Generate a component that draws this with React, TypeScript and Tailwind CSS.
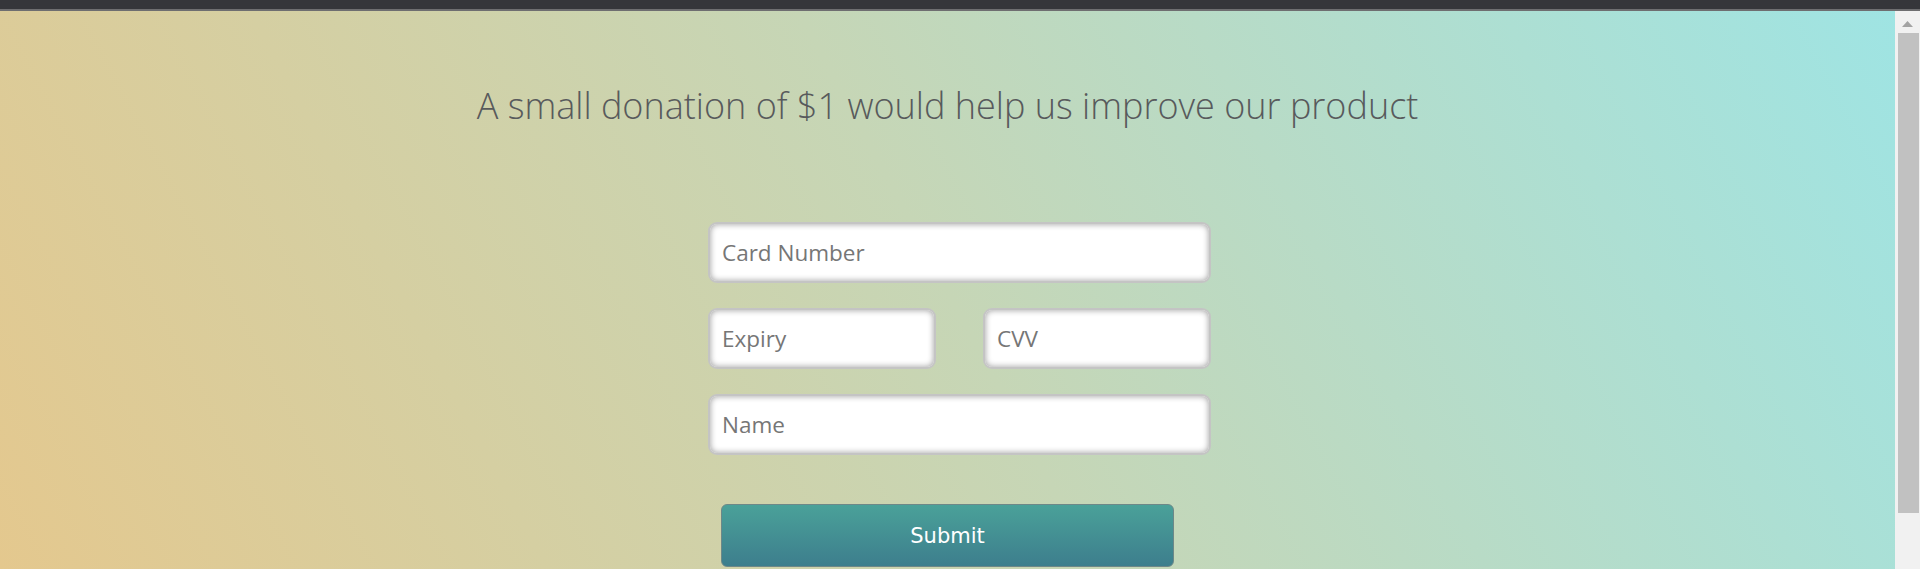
import React from 'react';

const inputClass =
  'h-[61px] rounded-[9px] border-2 border-[#c4c4c4] bg-white px-[12px] text-[22.5px] text-[#444] placeholder:text-[#767676] shadow-[inset_0_0_6px_rgba(0,0,0,0.4)] outline-none font-["Open_Sans",sans-serif]';

const App: React.FC = () => {
  return (
    <div className="w-[1920px] h-[569px] overflow-hidden flex flex-col bg-[#35363a]">
      <div className="h-[9px] bg-[#35363a]" />
      <div className="h-[2px] bg-[#6e6e70]" />
      <div className="flex flex-1 min-h-0">
        <main className="flex-1 bg-[linear-gradient(62deg,#e4c88e_0%,#c6d6b6_50%,#9fe4e3_100%)]">
          <h1 className="pt-[71px] text-center text-[36px] leading-[48px] font-light text-[#585a5c] font-['Open_Sans',sans-serif]">
            A small donation of $1 would help us improve our product
          </h1>

          <form className="w-[479px] mx-auto mt-[92px]" onSubmit={(e) => e.preventDefault()}>
            <div className="flex flex-col gap-[25px] w-[503px]">
              <input className={`${inputClass} w-full`} placeholder="Card Number" />
              <div className="flex justify-between">
                <input className={`${inputClass} w-[228px]`} placeholder="Expiry" />
                <input className={`${inputClass} w-[228px]`} placeholder="CVV" />
              </div>
              <input className={`${inputClass} w-full`} placeholder="Name" />
            </div>

            <button
              type="submit"
              className="block mx-auto mt-[49px] w-[453px] h-[63px] pt-[3px] rounded-[6px] border border-[#6d8888] bg-[linear-gradient(to_bottom,#4aa199,#3d7e8d)] text-white text-[21px] font-['DejaVu_Sans',Verdana,sans-serif]"
            >
              Submit
            </button>
          </form>
        </main>

        {/* scrollbar */}
        <div className="w-[25px] bg-[#f1f1f1] flex flex-col items-center">
          <svg width="11" height="6" viewBox="0 0 11 6" className="mt-[10px]">
            <path d="M5.5 0 L11 6 L0 6 Z" fill="#a3a3a3" />
          </svg>
          <div className="mt-[6px] ml-[2px] w-[21px] h-[480px] bg-[#c1c1c1]" />
        </div>
      </div>
    </div>
  );
};

export default App;
